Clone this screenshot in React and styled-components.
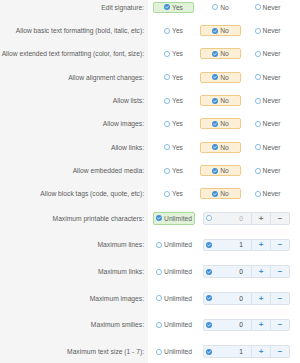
import React from "react";
import styled, { createGlobalStyle } from "styled-components";

const GlobalStyle = createGlobalStyle`
  html, body { margin: 0; padding: 0; background: #ffffff; }
  body { font-family: "Liberation Sans", Arial, sans-serif; overflow: hidden; }
`;

const Form = styled.div`
  display: flex;
  flex-direction: column;
  margin-top: -4.33px;
  width: 300px;
`;

const Row = styled.div`
  display: grid;
  grid-template-columns: 148px 1fr;
  height: ${(p) => (p.$number ? "26.67px" : "23.33px")};
`;

const Label = styled.div`
  background: #f5f5f5;
  display: flex;
  align-items: center;
  justify-content: flex-end;
  padding-right: 4px;
  padding-bottom: ${(p) => (p.$number ? "1.3px" : "0")};
  font-size: 6.7px;
  color: #5c5c5c;
  white-space: nowrap;
`;

const Controls = styled.div`
  display: flex;
  align-items: center;
  padding-left: 5px;
  padding-bottom: ${(p) => (p.$number ? "1.3px" : "0")};
  gap: ${(p) => (p.$number ? "8px" : "6px")};
`;

const tones = {
  green: { bg: "#e1f2d9", border: "#a9d99b" },
  yellow: { bg: "#fcefd5", border: "#efcb8a" },
  none: { bg: "transparent", border: "transparent" },
};

const Choice = styled.div`
  box-sizing: border-box;
  width: ${(p) => (p.$wide ? "42px" : "41px")};
  height: ${(p) => (p.$wide ? "13px" : "11px")};
  display: flex;
  align-items: center;
  justify-content: center;
  gap: 2px;
  border: 1px solid ${(p) => tones[p.$tone].border};
  background: ${(p) => tones[p.$tone].bg};
  border-radius: 2px;
  font-size: 6.7px;
  color: #626262;
  white-space: nowrap;
`;

const MarkSvg = styled.svg`
  width: 6px;
  height: 6px;
  flex: none;
  display: block;
`;

function Mark({ on }) {
  return (
    <MarkSvg viewBox="0 0 10 10">
      {on ? (
        <>
          <circle cx="5" cy="5" r="5" fill="#3f8fd6" />
          <path d="M2.7 5.1 L4.3 6.7 L7.4 3.5" fill="none" stroke="#fff" strokeWidth="1.4" strokeLinecap="round" strokeLinejoin="round" />
        </>
      ) : (
        <circle cx="5" cy="5" r="4.3" fill="#fff" stroke="#5aa5e3" strokeWidth="1.2" />
      )}
    </MarkSvg>
  );
}

const Spin = styled.div`
  box-sizing: border-box;
  width: 87px;
  height: 12.5px;
  display: flex;
  border: 1px solid #dde2e8;
  border-radius: 2px;
  background: ${(p) => (p.$on ? "#edf4fc" : "#f2f3f4")};
  overflow: hidden;
`;

const SpinInput = styled.div`
  width: 48px;
  display: flex;
  align-items: center;
  justify-content: space-between;
  padding: 0 8px 0 2px;
  box-sizing: border-box;
  border-right: 1px solid #dfe3e8;
  font-size: 6.7px;
  color: ${(p) => (p.$on ? "#444" : "#b0b0b0")};
`;

const SpinBtn = styled.div`
  flex: 1;
  display: flex;
  align-items: center;
  justify-content: center;
  font-size: 8px;
  font-weight: bold;
  color: ${(p) => (p.$on ? "#3f8fd6" : "#777")};
  & + & { border-left: 1px solid #dfe3e8; }
`;

const choiceRows = [
  ["Edit signature:", 0],
  ["Allow basic text formatting (bold, italic, etc):", 1],
  ["Allow extended text formatting (color, font, size):", 1],
  ["Allow alignment changes:", 1],
  ["Allow lists:", 1],
  ["Allow images:", 1],
  ["Allow links:", 1],
  ["Allow embedded media:", 1],
  ["Allow block tags (code, quote, etc):", 1],
];

const numberRows = [
  ["Maximum printable characters:", null],
  ["Maximum lines:", 1],
  ["Maximum links:", 0],
  ["Maximum images:", 0],
  ["Maximum smilies:", 0],
  ["Maximum text size (1 - 7):", 1],
];

const options = ["Yes", "No", "Never"];
const optionTone = ["green", "yellow", "none"];

export default function App() {
  return (
    <>
      <GlobalStyle />
      <Form>
        {choiceRows.map(([label, sel]) => (
          <Row key={label}>
            <Label>{label}</Label>
            <Controls>
              {options.map((o, i) => (
                <Choice key={o} $tone={sel === i ? optionTone[i] : "none"}>
                  <Mark on={sel === i} />
                  {o}
                </Choice>
              ))}
            </Controls>
          </Row>
        ))}
        {numberRows.map(([label, val]) => {
          const on = val !== null;
          return (
            <Row key={label} $number>
              <Label $number>{label}</Label>
              <Controls $number>
                <Choice $wide $tone={on ? "none" : "green"}>
                  <Mark on={!on} />
                  Unlimited
                </Choice>
                <Spin $on={on}>
                  <SpinInput $on={on}>
                    <Mark on={on} />
                    {on ? val : 0}
                  </SpinInput>
                  <SpinBtn $on={on}>+</SpinBtn>
                  <SpinBtn $on={on}>−</SpinBtn>
                </Spin>
              </Controls>
            </Row>
          );
        })}
      </Form>
    </>
  );
}
